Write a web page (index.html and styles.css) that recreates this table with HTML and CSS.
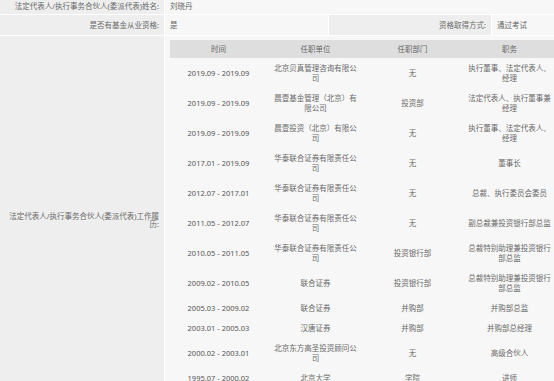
FILE: index.html
```html
<!DOCTYPE html>
<html lang="zh-CN">
<head>
<meta charset="utf-8">
<title>基金管理人信息</title>
<link rel="stylesheet" href="styles.css">
</head>
<body>
<table class="info">
  <colgroup>
    <col class="c-label">
    <col class="c-val">
    <col class="c-label2">
    <col class="c-val2">
  </colgroup>
  <tr class="r-first">
    <th>法定代表人/执行事务合伙人(委派代表)姓名:</th>
    <td colspan="3">刘晓丹</td>
  </tr>
  <tr>
    <th>是否有基金从业资格:</th>
    <td>是</td>
    <th>资格取得方式:</th>
    <td>通过考试</td>
  </tr>
  <tr>
    <th class="mid">法定代表人/执行事务合伙人(委派代表)工作履历:</th>
    <td colspan="3" class="hist">
      <table class="jobs">
        <thead>
          <tr><th>时间</th><th>任职单位</th><th>任职部门</th><th>职务</th></tr>
        </thead>
        <tbody>
          <tr><td>2019.09 - 2019.09</td><td>北京贝真管理咨询有限公司</td><td>无</td><td>执行董事、法定代表人、经理</td></tr>
          <tr><td>2019.09 - 2019.09</td><td>晨壹基金管理（北京）有限公司</td><td>投资部</td><td>法定代表人、执行董事兼经理</td></tr>
          <tr><td>2019.09 - 2019.09</td><td>晨壹投资（北京）有限公<br>司</td><td>无</td><td>执行董事、法定代表人、经理</td></tr>
          <tr><td>2017.01 - 2019.09</td><td>华泰联合证券有限责任公司</td><td>无</td><td>董事长</td></tr>
          <tr><td>2012.07 - 2017.01</td><td>华泰联合证券有限责任公司</td><td>无</td><td>总裁、执行委员会委员</td></tr>
          <tr><td>2011.05 - 2012.07</td><td>华泰联合证券有限责任公司</td><td>无</td><td>副总裁兼投资银行部总监</td></tr>
          <tr><td>2010.05 - 2011.05</td><td>华泰联合证券有限责任公司</td><td>投资银行部</td><td>总裁特别助理兼投资银行部总监</td></tr>
          <tr><td>2009.02 - 2010.05</td><td>联合证券</td><td>投资银行部</td><td>总裁特别助理兼投资银行部总监</td></tr>
          <tr><td>2005.03 - 2009.02</td><td>联合证券</td><td>并购部</td><td>并购部总监</td></tr>
          <tr><td>2003.01 - 2005.03</td><td>汉唐证券</td><td>并购部</td><td>并购部总经理</td></tr>
          <tr><td>2000.02 - 2003.01</td><td>北京东方高圣投资顾问公司</td><td>无</td><td>高级合伙人</td></tr>
          <tr><td>1995.07 - 2000.02</td><td>北京大学</td><td>学院</td><td>讲师</td></tr>
        </tbody>
      </table>
    </td>
  </tr>
</table>
</body>
</html>
```
FILE: styles.css
```css
html, body {
  margin: 0;
  padding: 0;
  overflow: hidden;
  background: #ffffff;
}

body {
  font-family: "Noto Sans", "Noto Sans CJK SC", sans-serif;
  font-size: 7.5px;
  line-height: 10px;
  color: #666666;
}

.info {
  width: 662px;
  table-layout: fixed;
  border-collapse: separate;
  border-spacing: 0;
}

.c-label { width: 165px; }
.c-val { width: 164px; }
.c-label2 { width: 163px; }
.c-val2 { width: 170px; }

.info > tbody > tr > th,
.info > tbody > tr > td {
  padding: 5px 5px;
  border-right: 1px solid #ffffff;
  border-bottom: 1px solid #ffffff;
  vertical-align: middle;
}

.info > tbody > tr > th {
  background: #eeeeee;
  font-weight: normal;
  text-align: right;
  color: #6a6a6a;
}

.info > tbody > tr > td {
  background: #f7f7f7;
  text-align: left;
  color: #666666;
}

.info > tbody > tr.r-first > th,
.info > tbody > tr.r-first > td {
  padding-top: 1px;
  padding-bottom: 3px;
}

.info > tbody > tr > th.mid {
  line-height: 8px;
}

.info > tbody > tr > td.hist {
  padding: 4px 5px 16px 5px;
  vertical-align: top;
}

.jobs {
  width: 388px;
  table-layout: fixed;
  border-collapse: collapse;
}

.jobs th {
  background: #dedede;
  font-weight: normal;
  color: #666666;
  padding: 4px 6px;
  text-align: center;
}

.jobs td {
  padding: 5px 6px;
  text-align: center;
  vertical-align: middle;
  color: #6a6a6a;
}

.jobs td:first-child {
  color: #555555;
}
```
